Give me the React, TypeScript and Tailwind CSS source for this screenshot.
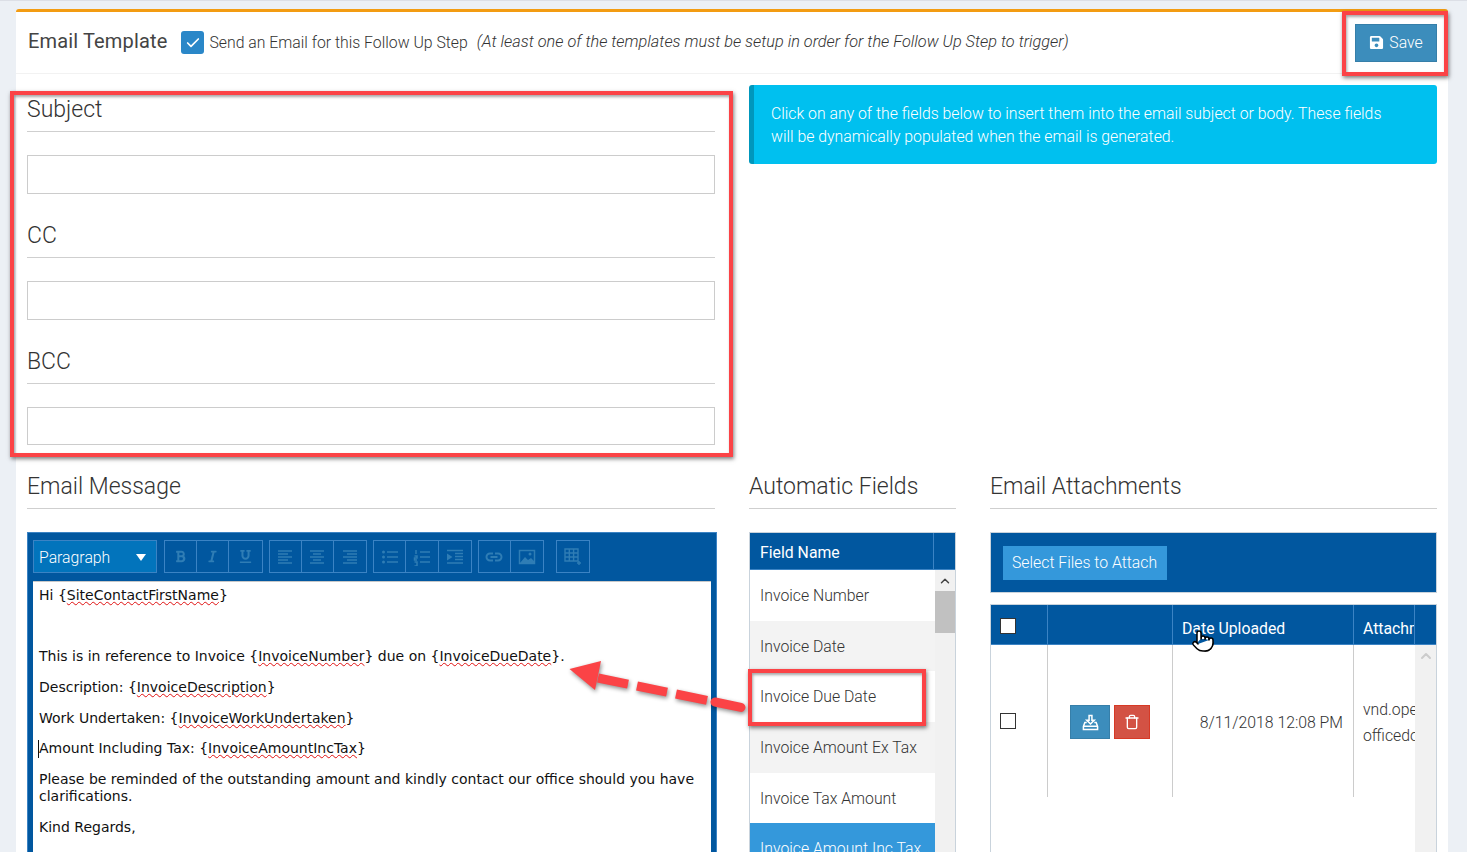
import { Check, ChevronUp, Pointer, Trash } from "lucide-react";
import { FaBold, FaItalic, FaSave, FaUnderline } from "react-icons/fa";
import type { ReactNode } from "react";

const fieldRows = [
  "Invoice Number",
  "Invoice Date",
  "Invoice Due Date",
  "Invoice Amount Ex Tax",
  "Invoice Tax Amount",
];

function Heading({ children }: { children: ReactNode }) {
  return (
    <div className="h-[36px] border-b border-[#cfcfcf] flex items-start">
      <h3 className="text-[23px] leading-[28px] font-light text-[#333]">
        {children}
      </h3>
    </div>
  );
}

function FieldInput() {
  return (
    <div className="mt-[23px] h-[38.6px] border border-[#cccccc] bg-white" />
  );
}

function Misspelt({ children }: { children: ReactNode }) {
  return (
    <span className="underline decoration-wavy decoration-[#e01010] decoration-1">
      {children}
    </span>
  );
}

function ToolGroup({ children }: { children: ReactNode }) {
  return (
    <div className="flex h-[33px] border border-[#3b83c4] divide-x divide-[#3b83c4] text-[#2f7db5]">
      {children}
    </div>
  );
}

function ToolButton({ children }: { children: ReactNode }) {
  return (
    <div className="w-[32.2px] flex items-center justify-center text-[13px]">
      {children}
    </div>
  );
}

function StrokeIcon({ d, children }: { d: string; children?: ReactNode }) {
  return (
    <svg width="18" height="18" viewBox="0 0 18 18" fill="none" stroke="currentColor" strokeWidth="1.5">
      <path d={d} />
      {children}
    </svg>
  );
}

function EmailEditor() {
  return (
    <div className="w-[690px] h-[340px] bg-[#01579f] border border-[#3b83c4] px-[5px] pt-[7px]">
      <div className="flex items-center h-[33px]">
        <div className="w-[124px] h-[33px] bg-[#0274bc] border border-[#3b83c4] flex items-center justify-between pl-[5px] pr-[10px] pt-[2px] text-white text-[15.8px] font-light">
          <span>Paragraph</span>
          <svg width="10" height="7" viewBox="0 0 10 7" fill="currentColor">
            <path d="M0 0h10L5 7z" />
          </svg>
        </div>
        <div className="ml-[7px]">
          <ToolGroup>
            <ToolButton><FaBold /></ToolButton>
            <ToolButton><FaItalic /></ToolButton>
            <ToolButton><FaUnderline /></ToolButton>
          </ToolGroup>
        </div>
        <div className="ml-[6px]">
          <ToolGroup>
            <ToolButton><StrokeIcon d="M2 3h14M2 6h10M2 9h14M2 12h10M2 15h14" /></ToolButton>
            <ToolButton><StrokeIcon d="M2 3h14M5 6h8M2 9h14M5 12h8M2 15h14" /></ToolButton>
            <ToolButton><StrokeIcon d="M2 3h14M6 6h10M2 9h14M6 12h10M2 15h14" /></ToolButton>
          </ToolGroup>
        </div>
        <div className="ml-[6px]">
          <ToolGroup>
            <ToolButton>
              <StrokeIcon d="M6 4h11M6 9h11M6 14h11">
                <circle cx="2.5" cy="4" r="1.5" fill="currentColor" stroke="none" />
                <circle cx="2.5" cy="9" r="1.5" fill="currentColor" stroke="none" />
                <circle cx="2.5" cy="14" r="1.5" fill="currentColor" stroke="none" />
              </StrokeIcon>
            </ToolButton>
            <ToolButton>
              <StrokeIcon d="M7 4h10M7 9h10M7 14h10M3 2v4M1.5 8h2.5v2H1.5v2H4M1.5 14H4v4H1.5" />
            </ToolButton>
            <ToolButton>
              <StrokeIcon d="M1 2.5h16M9 5.5h8M9 8.5h8M9 11.5h8M1 15h16">
                <path d="M1 5.5l5.5 3.5L1 12.5z" fill="currentColor" stroke="none" />
              </StrokeIcon>
            </ToolButton>
          </ToolGroup>
        </div>
        <div className="ml-[6px]">
          <ToolGroup>
            <ToolButton>
              <svg width="18" height="18" viewBox="0 0 18 18" fill="none" stroke="currentColor" strokeWidth="2">
                <path d="M8 5.5H5a3.5 3.5 0 000 7h3M10 5.5h3a3.5 3.5 0 010 7h-3M5.5 9h7" />
              </svg>
            </ToolButton>
            <ToolButton>
              <StrokeIcon d="M1.5 2.5h15v13h-15z">
                <path d="M2 15l5-6 3 3 3-2 3 3v2z" fill="currentColor" stroke="none" />
                <circle cx="12" cy="6" r="1.5" fill="currentColor" stroke="none" />
              </StrokeIcon>
            </ToolButton>
          </ToolGroup>
        </div>
        <div className="ml-3">
          <ToolGroup>
            <ToolButton>
              <svg width="18" height="18" viewBox="0 0 18 18" fill="none" stroke="currentColor" strokeWidth="1.4">
                <path d="M1 1h13v12H1zM1 5h13M1 9h13M5.3 1v12M9.6 1v12M15 13v4M13 15h4" />
              </svg>
            </ToolButton>
          </ToolGroup>
        </div>
      </div>
      <div className="mt-2 h-[300px] bg-white border-t border-[#c8c8c8] px-[6px] pt-[5px] font-['DejaVu_Sans',sans-serif] text-[14px] leading-[17.33px] text-[#111] flex flex-col gap-[13.33px]">
        <p>Hi {"{"}<Misspelt>SiteContactFirstName</Misspelt>{"}"}</p>
        <p>&nbsp;</p>
        <p>This is in reference to Invoice {"{"}<Misspelt>InvoiceNumber</Misspelt>{"}"} due on {"{"}<Misspelt>InvoiceDueDate</Misspelt>{"}"}.</p>
        <p>Description: {"{"}<Misspelt>InvoiceDescription</Misspelt>{"}"}</p>
        <p>Work Undertaken: {"{"}<Misspelt>InvoiceWorkUndertaken</Misspelt>{"}"}</p>
        <p className="border-l border-[#111] -ml-px">Amount Including Tax: {"{"}<Misspelt>InvoiceAmountIncTax</Misspelt>{"}"}</p>
        <p>Please be reminded of the outstanding amount and kindly contact our office should you have clarifications.</p>
        <p>Kind Regards,</p>
        <p>Admin</p>
      </div>
    </div>
  );
}

function FieldsTable() {
  return (
    <div className="border border-[#c9d3dc] h-[330px]">
      <div className="h-[37px] bg-[#01579f] border-b border-[#3b83c4] flex text-white text-[15.8px] font-normal">
        <div className="w-[183px] flex items-center pl-[10px] pt-[3px]">Field Name</div>
        <div className="flex-1 border-l border-[#3b83c4]" />
      </div>
      <div className="flex">
        <div className="w-[185px]">
          {fieldRows.map((row, i) => (
            <div
              key={row}
              className={`h-[50.6px] flex items-center pl-[10px] pt-[1px] text-[15.8px] font-light text-[#333] ${i % 2 === 1 ? "bg-[#f3f3f3]" : "bg-white"}`}
            >
              {row}
            </div>
          ))}
          <div className="h-[50.6px] flex items-center pl-[10px] pt-[1px] text-[15.8px] font-light text-white bg-[#3498db]">
            Invoice Amount Inc Tax
          </div>
        </div>
        <div className="flex-1 bg-[#f1f1f1] flex flex-col">
          <div className="h-[21px] flex items-center justify-center text-[#444]">
            <ChevronUp size={14} strokeWidth={2.5} />
          </div>
          <div className="h-[42px] bg-[#c1c1c1]" />
        </div>
      </div>
    </div>
  );
}

function AttachmentsTable() {
  return (
    <div className="flex flex-col gap-[11px]">
      <div className="h-[61px] bg-[#01579f] border border-[#c9d3dc] flex items-center pl-3">
        <div className="w-[164px] h-[34px] bg-[#3498db] flex items-center pl-[9px] text-white text-[15.8px] font-light">
          Select Files to Attach
        </div>
      </div>
      <div className="h-[250px] border border-[#c9d3dc] border-b-0 relative">
        <div className="h-10 bg-[#01579f] border-b border-[#3b83c4] flex text-white text-[15.8px] font-normal">
          <div className="w-[56px] flex items-center pl-[9px] pt-[2px]">
            <span className="size-4 bg-white border border-[#333]" />
          </div>
          <div className="w-[125px] border-l border-[#3b83c4]" />
          <div className="w-[181px] border-l border-[#3b83c4] flex items-end pl-[9px] pb-[3px]">
            Date Uploaded
          </div>
          <div className="w-[61px] border-l border-[#3b83c4] flex items-end pl-[9px] pb-[3px] overflow-hidden whitespace-nowrap">
            Attachment
          </div>
          <div className="flex-1 border-l border-[#3b83c4]" />
        </div>
        <div className="flex h-[210px]">
          <div className="flex h-[152px] text-[15.8px] font-light text-[#333]">
            <div className="w-[56px] flex items-center pl-[9px]">
              <span className="size-4 bg-white border border-[#333]" />
            </div>
            <div className="w-[125px] border-l border-[#cccccc] flex items-center justify-center gap-1 pt-[2px]">
              <div className="w-10 h-[34px] bg-[#3c8dbc] border border-[#367fa9] flex items-center justify-center text-white">
                <svg width="17" height="17" viewBox="0 0 18 18" fill="none" stroke="currentColor" strokeWidth="1.6">
                  <path d="M7.5 1.5h3v5h2.5L9 10.5 5 6.5h2.5zM5 9H3l-1.5 4v3.5h15V13L15 9h-2M1.5 13h15" />
                </svg>
              </div>
              <div className="w-9 h-[34px] bg-[#d35244] border border-[#d73925] flex items-center justify-center text-white">
                <Trash size={16} />
              </div>
            </div>
            <div className="w-[181px] border-l border-[#cccccc] flex items-center justify-end pr-[10px] pt-[4px]">
              8/11/2018 12:08 PM
            </div>
            <div className="w-[62px] border-l border-[#cccccc] pl-[9px] pt-[4px] flex flex-col justify-center overflow-hidden whitespace-nowrap leading-[26px]">
              <span>vnd.openxml</span>
              <span>officedocument</span>
            </div>
          </div>
          <div className="flex-1 bg-[#f1f1f1] flex justify-center pt-[3px] text-[#cccccc]">
            <ChevronUp size={16} strokeWidth={3} />
          </div>
        </div>
        {/* Puntero del ratón */}
        <Pointer
          size={24}
          strokeWidth={1.5}
          className="absolute left-[200px] top-[24px] text-black fill-white"
        />
      </div>
    </div>
  );
}

export default function App() {
  return (
    <div className="relative w-[1467px] h-[852px] overflow-hidden bg-[#ecf0f5] font-['Roboto',sans-serif] border-t border-[#dcdfe6]">
      <div className="mt-2 ml-4 w-[1432px] h-[860px] bg-white border-t-[3px] border-[#f39c12] rounded-t-[3px]">
        {/* Cabecera */}
        <div className="h-[62px] border-b border-[#f2f2f2] flex items-center pl-3 pr-[11px]">
          <span className="-mt-[3px] text-[20px] font-normal text-[#444] tracking-[0.15px]">
            Email Template
          </span>
          <span className="ml-[14px] size-[23px] rounded-[3px] bg-[#2a87c8] flex items-center justify-center text-white">
            <Check size={16} strokeWidth={2.5} />
          </span>
          <span className="ml-[5px] text-[15.8px] font-light text-[#333]">
            Send an Email for this Follow Up Step
          </span>
          <span className="ml-[9px] text-[16.3px] font-light italic text-[#333]">
            (At least one of the templates must be setup in order for the Follow Up Step to trigger)
          </span>
          <button className="ml-auto w-[82px] h-[38px] bg-[#3c8dbc] border border-[#367fa9] flex items-center justify-center gap-[5px] text-white text-[15.8px] font-light">
            <FaSave size={15} />
            Save
          </button>
        </div>

        <div className="pl-[11px] pr-[11px]">
          <div className="flex gap-[34px]">
            {/* Subject, CC, BCC */}
            <div className="w-[688px] pt-[22.4px]">
              <Heading>Subject</Heading>
              <FieldInput />
              <div className="mt-[28px]">
                <Heading>CC</Heading>
                <FieldInput />
              </div>
              <div className="mt-[28px]">
                <Heading>BCC</Heading>
                <FieldInput />
              </div>
            </div>
            <div className="flex-1 pt-[11px]">
              <div className="h-[79px] bg-[#00c0ef] border-l-[5px] border-[#0097bc] rounded-[3px] pl-[17px] pr-[40px] pt-[17px] text-white text-[15.8px] leading-[23px] font-light">
                Click on any of the fields below to insert them into the email subject or body. These fields will be dynamically populated when the email is generated.
              </div>
            </div>
          </div>

          {/* Mensaje, campos y adjuntos */}
          <div className="mt-[28px] flex gap-[34px]">
            <div className="w-[688px]">
              <Heading>Email Message</Heading>
              <div className="mt-[23px]">
                <EmailEditor />
              </div>
            </div>
            <div className="w-[207px]">
              <Heading>Automatic Fields</Heading>
              <div className="mt-[23px]">
                <FieldsTable />
              </div>
            </div>
            <div className="flex-1">
              <Heading>Email Attachments</Heading>
              <div className="mt-[23px]">
                <AttachmentsTable />
              </div>
            </div>
          </div>
        </div>
      </div>

      {/* Anotaciones rojas sobre la captura */}
      <div className="absolute left-[1342px] top-[10px] w-[106px] h-[65px] border-4 border-[#fb4346] shadow-[1px_2px_4px_rgba(0,0,0,0.5),inset_1px_2px_3px_rgba(0,0,0,0.35)]" />
      <div className="absolute left-[10px] top-[90px] w-[723px] h-[366px] border-4 border-[#fb4346] shadow-[1px_2px_4px_rgba(0,0,0,0.5),inset_1px_2px_3px_rgba(0,0,0,0.35)]" />
      <div className="absolute left-[748px] top-[668px] w-[178px] h-[57px] border-4 border-[#fb4346] shadow-[1px_2px_4px_rgba(0,0,0,0.5),inset_1px_2px_3px_rgba(0,0,0,0.35)]" />
      <svg className="absolute left-[560px] top-[649px]" width="200" height="75" viewBox="0 0 200 75" fill="none">
        <g style={{ filter: "drop-shadow(1px 2px 2px rgba(0,0,0,0.45))" }} stroke="#fb4346" strokeWidth="9">
          <path d="M9.5 19 L41 11 L35 40 Z" fill="#fb4346" stroke="none" />
          <path d="M38 28 L68 34.2" />
          <path d="M77 36 L107 42.2" />
          <path d="M116 44 L147 50.4" />
          <path d="M155 52 L181 57.4" strokeLinecap="round" />
        </g>
      </svg>
    </div>
  );
}
